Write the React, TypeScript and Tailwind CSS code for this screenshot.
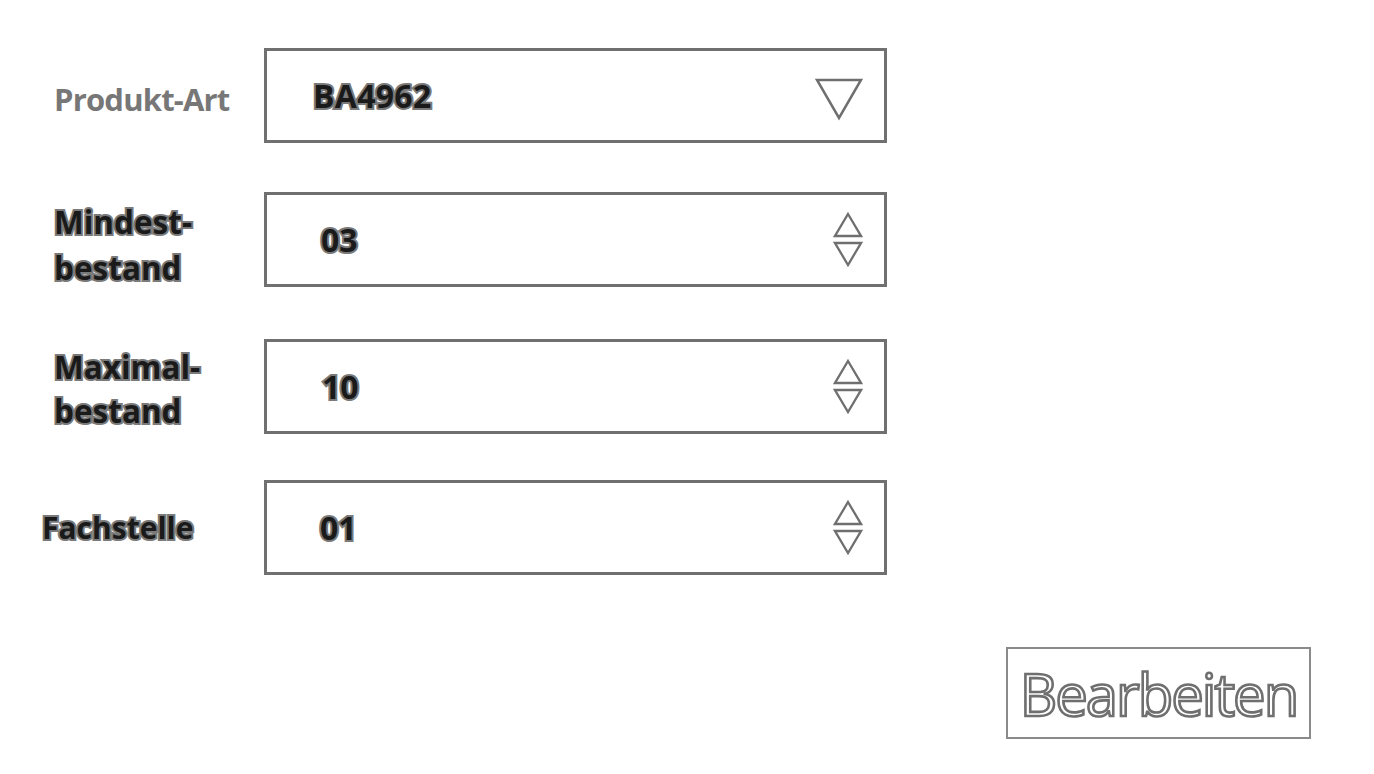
import React from "react";

const DownTri = () => (
  <svg width="48" height="44" viewBox="0 0 48 44" className="shrink-0">
    <polygon points="2,3 46,3 24,41" fill="none" stroke="#6f6f6f" strokeWidth="2.5" strokeLinejoin="miter" />
  </svg>
);

const Spinner = () => (
  <svg width="30" height="60" viewBox="0 0 30 60" className="shrink-0">
    <polygon points="15,3 28,25 2,25" fill="none" stroke="#6f6f6f" strokeWidth="2.3" />
    <polygon points="2,32 28,32 15,54" fill="none" stroke="#6f6f6f" strokeWidth="2.3" />
  </svg>
);

const strokeText =
  "text-[#1a1a1a] [-webkit-text-stroke:4px_#7a7a7a] [paint-order:stroke_fill] font-bold";

function Row({
  label,
  value,
  spinner,
  mt,
  labelCls,
  valueCls,
}: {
  label: React.ReactNode;
  value: string;
  spinner?: boolean;
  mt: string;
  labelCls: string;
  valueCls: string;
}) {
  return (
    <div className={`flex items-center ${mt}`}>
      <div className={`w-[264px] shrink-0 ${labelCls}`}>{label}</div>
      <div className="w-[623px] h-[95px] border-[3px] border-[#707070] flex items-center justify-between">
        <span className={`text-[32px] ${strokeText} ${valueCls}`}>{value}</span>
        {spinner ? (
          <div className="mr-[21px] mt-[2px]">
            <Spinner />
          </div>
        ) : (
          <div className="mr-[21px] mt-[6px]">
            <DownTri />
          </div>
        )}
      </div>
    </div>
  );
}

export default function App() {
  return (
    <div
      className="w-[1374px] h-[774px] bg-white relative"
      style={{ fontFamily: '"Open Sans", "Noto Sans", sans-serif' }}
    >
      <div className="pt-[48px] flex flex-col">
        <Row
          mt="mt-0"
          label={<div className="translate-y-[4px]">Produkt-Art</div>}
          labelCls="pl-[54px] text-[31px] font-bold text-[#777777] tracking-[-0.8px]"
          value="BA4962"
          valueCls="ml-[46px] tracking-[0.3px]"
        />
        <Row
          mt="mt-[49px]"
          label={
            <div className="leading-[46px] translate-y-[5px]">
              Mindest-
              <br />
              bestand
            </div>
          }
          labelCls={`pl-[54px] text-[31.5px] ${strokeText}`}
          value="03"
          valueCls="ml-[54px]"
          spinner
        />
        <Row
          mt="mt-[52px]"
          label={
            <div className="leading-[44px] translate-y-[2px]">
              Maximal-
              <br />
              bestand
            </div>
          }
          labelCls={`pl-[54px] text-[31.5px] ${strokeText}`}
          value="10"
          valueCls="ml-[55px]"
          spinner
        />
        <Row
          mt="mt-[46px]"
          label="Fachstelle"
          labelCls={`pl-[42px] text-[30px] ${strokeText}`}
          value="01"
          valueCls="ml-[53px]"
          spinner
        />
      </div>
      <div className="flex justify-end pr-[63px] mt-[72px]">
        <div className="w-[305px] h-[92px] border-2 border-[#8a8a8a] flex items-center justify-center">
          <span className="text-[58px] font-medium text-white [-webkit-text-stroke:2.6px_#6f6f6f] tracking-[-2px]">
            Bearbeiten
          </span>
        </div>
      </div>
    </div>
  );
}
